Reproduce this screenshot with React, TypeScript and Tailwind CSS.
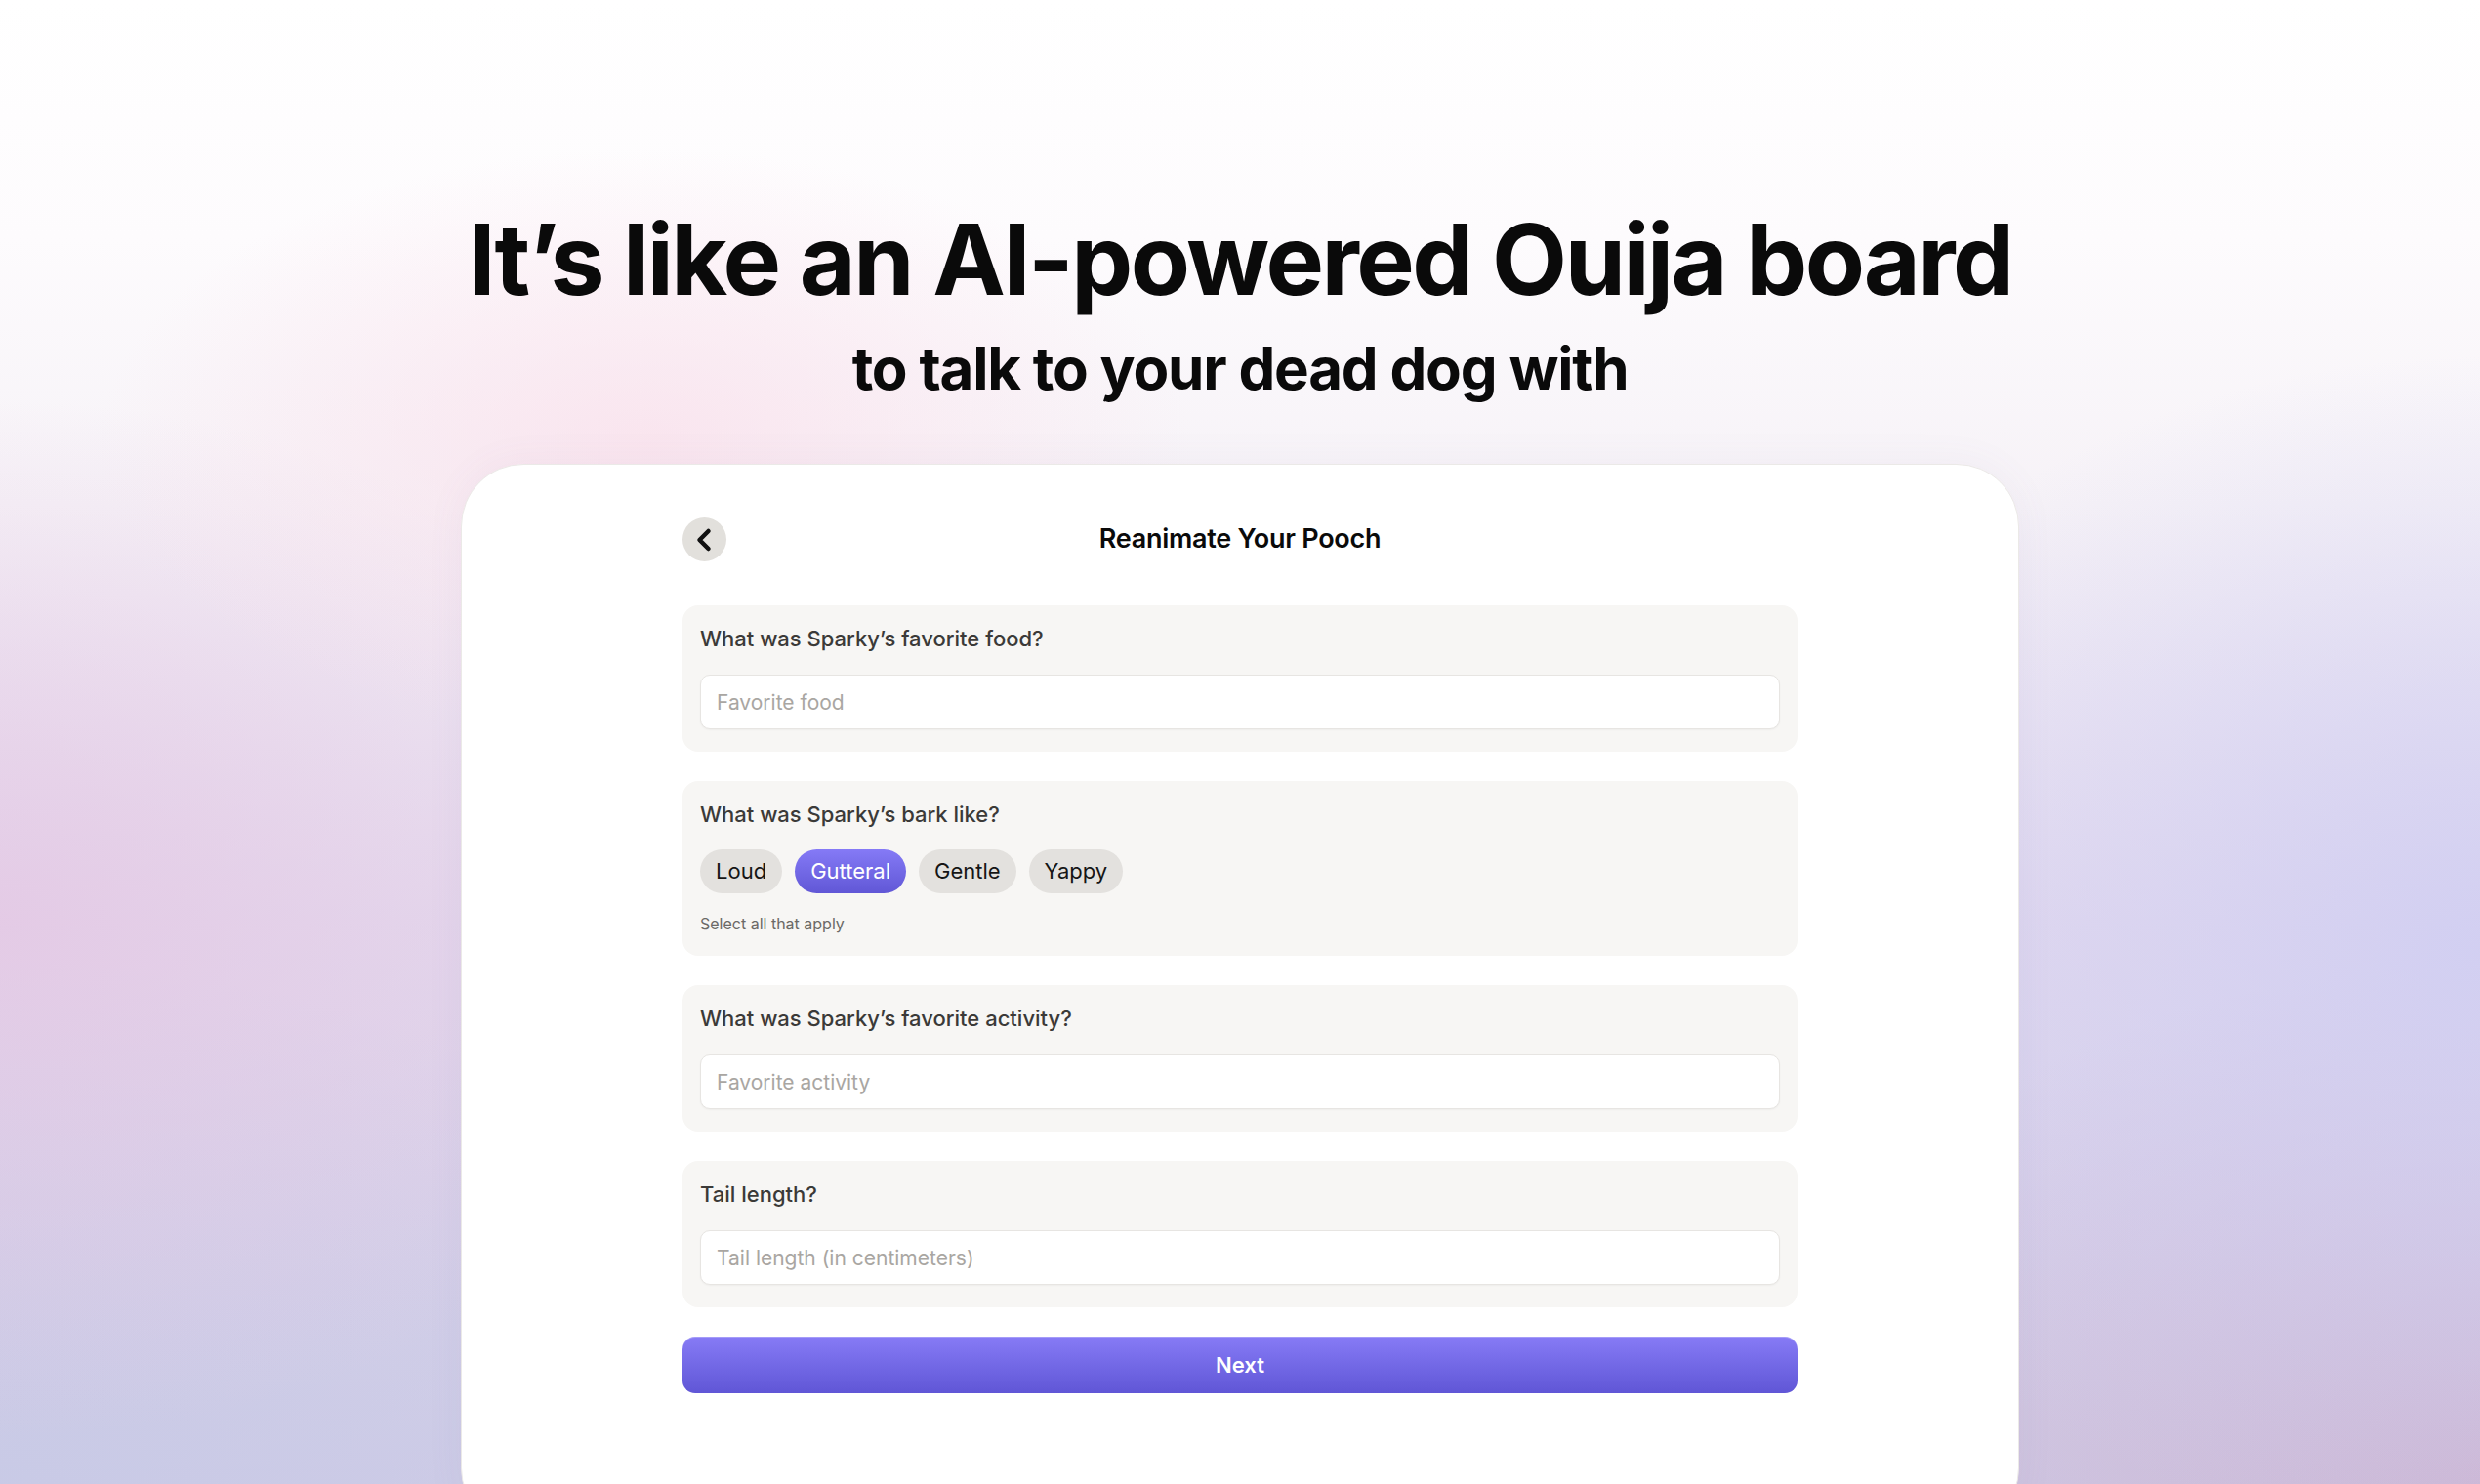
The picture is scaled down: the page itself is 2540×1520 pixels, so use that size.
import React, { useState } from 'react'
import { ChevronLeft } from 'lucide-react'

const barks = ['Loud', 'Gutteral', 'Gentle', 'Yappy']

function Field({ label, placeholder }: { label: string; placeholder: string }) {
    return (
        <div className="rounded-2xl bg-[#f7f6f4] px-[18px] pt-[18px] pb-[23px] flex flex-col gap-[20px]">
            <label className="text-[22px] leading-[33px] font-medium text-[#3b3a38]">{label}</label>
            <input
                placeholder={placeholder}
                className="h-[56px] w-full rounded-[10px] border border-[#e7e5e2] bg-white px-[16px] text-[21px] text-[#222] placeholder:text-[#a9a6a2] outline-none shadow-[0_1px_2px_rgba(0,0,0,0.04)]"
            />
        </div>
    )
}

export default function App() {
    const [picked, setPicked] = useState<string[]>(['Gutteral'])

    const toggle = (b: string) => {
        setPicked(picked.includes(b) ? picked.filter((p) => p !== b) : [...picked, b])
    }

    return (
        <div
            className="h-[1520px] overflow-hidden font-['Inter',sans-serif] text-[#0a0a0a] bg-[radial-gradient(ellipse_22%_20%_at_26%_30%,rgba(250,222,234,0.7),transparent),radial-gradient(ellipse_30%_35%_at_0%_62%,rgba(228,200,228,0.85),transparent),radial-gradient(ellipse_30%_40%_at_100%_64%,rgba(208,206,242,0.9),transparent),radial-gradient(ellipse_30%_35%_at_100%_100%,rgba(204,182,212,0.95),transparent),radial-gradient(ellipse_35%_35%_at_0%_100%,rgba(200,202,230,0.9),transparent),linear-gradient(to_bottom,#ffffff_0%,#fdfbfd_16%,#f6f2f7_34%,#e3daee_62%,#cfcbe6_100%)]"
        >
            <div className="pt-[216px] flex flex-col items-center">
                <h1 className="text-[100px] leading-none font-bold tracking-[-0.025em]">It’s like an AI-powered Ouija board</h1>
                <h2 className="mt-[31px] text-[60px] leading-none font-bold tracking-[-0.02em]">to talk to your dead dog with</h2>

                {/* form card */}
                <div className="mt-[68px] w-[1596px] rounded-[64px] border border-[#ebe9e7] bg-white pt-[54px] pb-[140px] shadow-[0_0_40px_rgba(120,100,160,0.06)]">
                    <div className="mx-auto w-[1142px] flex flex-col">
                        <div className="relative flex items-center justify-center h-[45px]">
                            <button className="absolute left-0 top-0 h-[45px] w-[45px] rounded-full bg-[#e2e0dc] flex items-center justify-center">
                                <ChevronLeft size={36} strokeWidth={3} className="text-[#111] -ml-[2px]" />
                            </button>
                            <h3 className="text-[27px] font-semibold tracking-[-0.01em]">Reanimate Your Pooch</h3>
                        </div>

                        <div className="mt-[45px] flex flex-col gap-[30px]">
                            <Field label="What was Sparky’s favorite food?" placeholder="Favorite food" />

                            <div className="rounded-2xl bg-[#f7f6f4] px-[18px] pt-[18px] pb-[21px] flex flex-col">
                                <label className="text-[22px] leading-[33px] font-medium text-[#3b3a38]">What was Sparky’s bark like?</label>
                                <div className="mt-[19px] flex items-center gap-[13px]">
                                    {barks.map((b) => (
                                        <button
                                            key={b}
                                            onClick={() => toggle(b)}
                                            className={`h-[45px] rounded-full px-[16px] text-[22px] ${
                                                picked.includes(b)
                                                    ? 'bg-gradient-to-b from-[#857af6] to-[#6157d6] text-white'
                                                    : 'bg-[#e3e1de] text-[#151515]'
                                            }`}
                                        >
                                            {b}
                                        </button>
                                    ))}
                                </div>
                                <p className="mt-[19px] text-[16px] leading-[24px] text-[#6b6966]">Select all that apply</p>
                            </div>

                            <Field label="What was Sparky’s favorite activity?" placeholder="Favorite activity" />
                            <Field label="Tail length?" placeholder="Tail length (in centimeters)" />

                            <button className="h-[58px] w-full rounded-[13px] bg-gradient-to-b from-[#877bf6] to-[#6056d6] text-[22px] font-semibold text-white shadow-[inset_0_1px_0_rgba(255,255,255,0.25)]">
                                Next
                            </button>
                        </div>
                    </div>
                </div>
            </div>
        </div>
    )
}
